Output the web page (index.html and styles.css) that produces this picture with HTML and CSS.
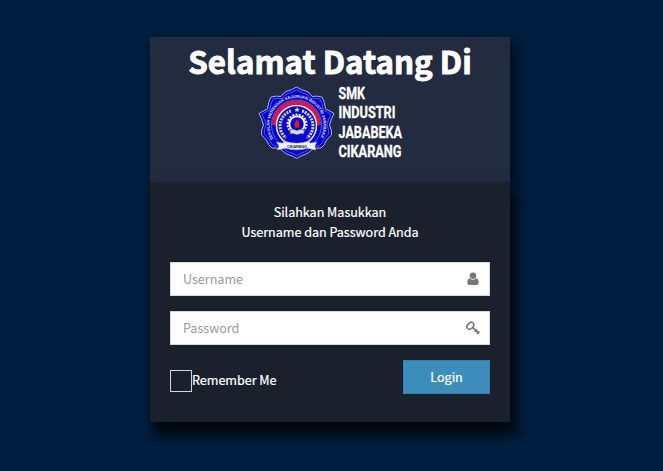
FILE: index.html
```html
<!DOCTYPE html>
<html lang="id">
<head>
<meta charset="utf-8">
<title>Login</title>
<link rel="stylesheet" href="styles.css">
</head>
<body>
<main class="login-box">
  <header class="login-logo">
    <h1>Selamat Datang Di</h1>
    <svg class="brand" width="150" height="78" viewBox="255 84 150 78" role="img">
      <defs>
        <path id="ring-top" d="M273.500 139A27 27 0 1 1 319.500 139"/>
        <path id="shield" d="M296.500 87Q301 90 307 91.500Q310 93 312 96.500Q316 95.500 322 97Q325 102 325.500 109Q330 111 334 113.500Q331 119 329.500 125Q332 130 331.500 135Q328 138 326 141Q325 145 321 148Q316 147.500 312 149.500Q309 153 305 154.500Q300 156 296.500 158.500Q293 156 288 154.500Q284 153 281 149.500Q277 147.500 272 148Q268 145 267 141Q265 138 261.500 135Q261 130 263.500 125Q262 119 259 113.500Q263 111 267.500 109Q268 102 271 97Q277 95.500 281 96.500Q283 93 286 91.500Q292 90 296.500 87Z"/>
      </defs>
      <use class="shield" href="#shield"/>
      <use class="shield-line" href="#shield" transform="translate(296.500 122.500) scale(.92) translate(-296.500 -122.500)"/>
      <circle class="outer-ring" cx="296.500" cy="125" r="25"/>
      <text class="ring-text"><textPath href="#ring-top" textLength="112">SEKOLAH MENENGAH KEJURUAN INDUSTRI JABABEKA</textPath></text>
      <path class="red-band" d="M274 125A22.500 22.500 0 0 1 319 125"/>
      <circle class="inner" cx="296.500" cy="125.500" r="20"/>
      <path class="wheat" d="M291 111A15.500 15.500 0 0 0 286 138"/>
      <path class="cotton" d="M302 111A15.500 15.500 0 0 1 307 138"/>
      <circle class="gear-teeth" cx="297" cy="124" r="9.500"/>
      <circle class="gear" cx="297" cy="124" r="7.700"/>
      <path class="flame" d="M297 119.500Q300.500 124 299 127.500H295Q293.500 124 297 119.500Z"/>
      <path class="book" d="M290 129.500Q294 128.500 297 130.500Q300 128.500 304 129.500V134Q300 133 297 135Q294 133 290 134Z"/>
      <path class="star" d="M297 107l.8 1.700 1.900.2-1.400 1.300.4 1.900-1.700-1-1.700 1 .4-1.900-1.400-1.300 1.900-.2Z"/>
      <path class="ribbon" d="M276 142L283 143L284 141Q297 145 309 141L310 143L317 142L315 146L316 150L308 148.500Q297 151 285 148.500L277 150L279 146Z"/>
      <text class="ribbon-text" x="287" y="147.500" textLength="20">CIKARANG</text>
      <g class="school">
        <text x="338.500" y="99" textLength="26.500" lengthAdjust="spacingAndGlyphs">SMK</text>
        <text x="338.500" y="118.300" textLength="57" lengthAdjust="spacingAndGlyphs">INDUSTRI</text>
        <text x="338.500" y="137.700" textLength="63.500" lengthAdjust="spacingAndGlyphs">JABABEKA</text>
        <text x="338.500" y="157" textLength="63" lengthAdjust="spacingAndGlyphs">CIKARANG</text>
      </g>
    </svg>
  </header>
  <section class="login-body">
    <p class="message">Silahkan Masukkan<br>Username dan Password Anda</p>
    <form>
      <div class="field">
        <input type="text" placeholder="Username" aria-label="Username">
        <svg width="14" height="14" viewBox="0 0 14 14"><circle cx="7" cy="3.700" r="3.300"/><path d="M3.700 6.200Q7 9.200 10.300 6.200Q12.700 7 12.700 11Q12.700 13 10.500 13H3.500Q1.300 13 1.300 11Q1.300 7 3.700 6.200Z"/></svg>
      </div>
      <div class="field">
        <input type="password" placeholder="Password" aria-label="Password">
        <svg width="14" height="14" viewBox="0 0 14 14"><ellipse class="key" cx="4.400" cy="4.800" rx="3.900" ry="2.800" transform="rotate(-45 4.400 4.800)"/><path class="key" d="M6.500 6.300L13 12.300M8.500 11L11.200 8.300M10.800 13L13.400 10.300"/></svg>
      </div>
      <div class="actions">
        <label><span class="check"></span><span class="label-text">Remember Me</span></label>
        <button type="button">Login</button>
      </div>
    </form>
  </section>
</main>
</body>
</html>
```
FILE: styles.css
```css
* { box-sizing: border-box; }
body {
  margin: 0;
  height: 471px;
  overflow: hidden;
  background: #001f3f;
  color: #fff;
  font: 12.6px/20px "Noto Sans CJK SC", "Noto Sans", sans-serif;
  letter-spacing: -.03px;
  -webkit-text-stroke: .2px;
}
.login-box { width: 360px; margin: 37px 0 0 150px; }
.login-logo {
  height: 145px;
  background: #222b40;
  text-align: center;
  box-shadow: 5px 5px 15px rgba(0, 0, 0, .65);
}
h1 {
  margin: 0;
  padding: 2px 0 1px;
  font-size: 31.300px;
  line-height: 44px;
  font-weight: 700;
  letter-spacing: 0;
  white-space: nowrap;
  -webkit-text-stroke: .9px;
}
.brand { display: block; margin-left: 105px; letter-spacing: 0; overflow: visible; -webkit-text-stroke: 0; }
.shield { fill: #0505cf; stroke: #aeb4d0; stroke-width: 1; }
.shield-line { fill: none; stroke: #7d84e0; stroke-width: .7; }
.outer-ring { fill: none; stroke: #969ee5; stroke-width: .6; }
.ring-text { font: 700 4px "Liberation Sans", sans-serif; fill: #e0e2f6; }
.red-band { fill: none; stroke: #e0183e; stroke-width: 4; }
.inner { fill: #0909d2; stroke: #eceaf8; stroke-width: 1.5; }
.wheat, .cotton { fill: none; stroke: #d7cf82; stroke-width: 3; stroke-dasharray: 2 1; }
.cotton { stroke: #d5dcec; }
.gear-teeth { fill: none; stroke: #f1f0fb; stroke-width: 2; stroke-dasharray: 2 1.3; }
.gear { fill: #0808bd; stroke: #f5f2fa; stroke-width: 2; }
.flame { fill: #e2183e; }
.book { fill: #d8d9df; stroke: #383448; stroke-width: .6; }
.star { fill: #f0e06b; }
.ribbon { fill: #eeeef3; stroke: #777; stroke-width: .4; }
.ribbon-text { font: 700 4px "Liberation Sans", sans-serif; fill: #333; }
.school { font: 700 16px Roboto, sans-serif; fill: #fff; stroke: #fff; stroke-width: .3; }
.login-body {
  position: relative;
  height: 240px;
  padding: 20px;
  background: #1a212d;
  box-shadow: 5px 11px 12px 2px rgba(0, 0, 0, .8);
}
.message { margin: 0 0 20px; text-align: center; }
.field {
  display: flex;
  align-items: center;
  height: 34px;
  margin-bottom: 15px;
  padding: 0 9px 0 12px;
  border: 1px solid #d2d6de;
  background: #fff;
}
.field input {
  flex: 1;
  min-width: 0;
  height: 30px;
  padding: 0 0 1px;
  border: 0;
  outline: 0;
  background: none;
  font: inherit;
  letter-spacing: inherit;
}
.field input::placeholder { color: #999; opacity: 1; -webkit-text-stroke: 0; }
.field svg { fill: #777; }
.field .key { fill: none; stroke: #777; stroke-width: 1.6; }
.actions { display: flex; justify-content: space-between; }
label { display: flex; align-items: center; height: 22px; margin-top: 10px; }
.label-text { padding-bottom: 2px; }
.check { width: 22px; height: 22px; border: 1px solid #d2d6de; }
button {
  width: 87px;
  height: 34px;
  padding: 0;
  border: 1px solid #367fa9;
  background: #3c8dbc;
  color: #fff;
  font: inherit;
  letter-spacing: 0;
}
```
